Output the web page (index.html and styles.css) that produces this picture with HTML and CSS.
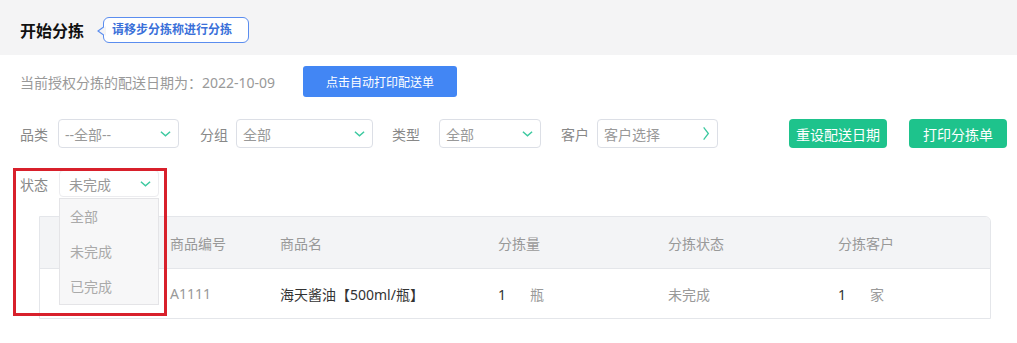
FILE: index.html
```html
<!DOCTYPE html>
<html lang="zh-CN">
<head>
    <meta charset="UTF-8">
    <meta name="viewport" content="width=device-width, initial-scale=1.0">
    <title>开始分拣</title>
    <link rel="stylesheet" href="styles.css">
</head>
<body>
    <div class="page-head">
        <h1>开始分拣</h1>
        <div class="tip">请移步分拣称进行分拣</div>
    </div>

    <div class="date-row">
        <span class="date-text">当前授权分拣的配送日期为：2022-10-09</span>
        <button class="btn-blue">点击自动打印配送单</button>
    </div>

    <div class="filter-row">
        <span class="label l-cat">品类</span>
        <div class="select w-cat"><span>--全部--</span><svg class="chev" viewBox="0 0 12 8"><polyline points="1,1.5 6,6 11,1.5"/></svg></div>
        <span class="label l-group">分组</span>
        <div class="select w-group"><span>全部</span><svg class="chev" viewBox="0 0 12 8"><polyline points="1,1.5 6,6 11,1.5"/></svg></div>
        <span class="label l-type">类型</span>
        <div class="select w-type"><span>全部</span><svg class="chev" viewBox="0 0 12 8"><polyline points="1,1.5 6,6 11,1.5"/></svg></div>
        <span class="label l-cust">客户</span>
        <div class="select w-cust"><span>客户选择</span><svg class="arrow" viewBox="0 0 8 16"><polyline points="1.5,1.5 6.5,8 1.5,14.5"/></svg></div>
        <div class="spacer"></div>
        <button class="btn-green">重设配送日期</button>
        <button class="btn-green">打印分拣单</button>
    </div>

    <div class="status-row">
        <span class="label l-status">状态</span>
        <div class="status-wrap">
            <div class="select w-status"><span>未完成</span><svg class="chev" viewBox="0 0 12 8"><polyline points="1,1.5 6,6 11,1.5"/></svg></div>
            <ul class="dropdown">
                <li>全部</li>
                <li>未完成</li>
                <li>已完成</li>
            </ul>
        </div>
        <div class="highlight"></div>
    </div>

    <div class="table">
        <div class="tr th">
            <div></div>
            <div>商品编号</div>
            <div>商品名</div>
            <div>分拣量</div>
            <div>分拣状态</div>
            <div>分拣客户</div>
        </div>
        <div class="tr td">
            <div></div>
            <div class="muted">A1111</div>
            <div>海天酱油【500ml/瓶】</div>
            <div>1<span class="unit">瓶</span></div>
            <div class="muted">未完成</div>
            <div>1<span class="unit">家</span></div>
        </div>
    </div>
</body>
</html>
```

FILE: styles.css
```css
body {
    margin: 0;
    font-family: "Noto Sans", "Noto Sans CJK SC", sans-serif;
    font-size: 14px;
    color: #333;
    background-color: #fff;
}
.page-head {
    height: 55px;
    background-color: #f4f4f5;
    display: flex;
    align-items: center;
    padding-left: 20px;
    padding-top: 4px;
    box-sizing: border-box;
}
h1 {
    margin: 0;
    font-size: 16px;
    font-weight: bold;
    color: #111;
}
.tip {
    position: relative;
    margin-left: 19px;
    height: 26px;
    line-height: 24px;
    box-sizing: border-box;
    padding: 0 16px 0 8px;
    border: 1px solid #5b8def;
    border-radius: 6px;
    background-color: #fff;
    color: #3a70d9;
    font-size: 12px;
    font-weight: bold;
}
.tip::before,
.tip::after {
    content: "";
    position: absolute;
    top: 8px;
    width: 0;
    height: 0;
    border-style: solid;
    border-width: 5px 7px 5px 0;
}
.tip::before {
    left: -7px;
    border-color: transparent #5b8def transparent transparent;
}
.tip::after {
    left: -5px;
    border-color: transparent #f4f4f5 transparent transparent;
}
.date-row {
    margin-top: 11px;
    height: 31px;
    display: flex;
    align-items: center;
    padding-left: 20px;
}
.date-text {
    color: #999;
    font-size: 14px;
}
.btn-blue {
    margin-left: 28px;
    width: 154px;
    height: 31px;
    border: none;
    border-radius: 3px;
    background-color: #4286f4;
    color: #fff;
    font-family: inherit;
    font-size: 12px;
}
.filter-row {
    margin-top: 22px;
    height: 29px;
    display: flex;
    align-items: center;
    padding: 0 10px 0 20px;
}
.label {
    color: #888;
    font-size: 14px;
}
.l-cat { margin-right: 10px; }
.l-status { margin-right: 11px; }
.l-group { margin-right: 8px; }
.l-type { margin-right: 19px; }
.l-cust { margin-right: 8px; }
.select {
    height: 29px;
    box-sizing: border-box;
    border: 1px solid #dcdfe6;
    border-radius: 4px;
    display: flex;
    align-items: center;
    justify-content: space-between;
    padding: 0 7px 0 6px;
    color: #999;
    font-size: 14px;
    background-color: #fff;
}
.w-cat { width: 121px; margin-right: 21px; }
.w-group { width: 137px; margin-right: 19px; }
.w-type { width: 102px; margin-right: 20px; }
.w-cust { width: 121px; }
.w-status { width: 100px; height: 27px; padding-left: 9px; border-color: #ececef; }
.chev {
    width: 11px;
    height: 8px;
    fill: none;
    stroke: #3cc9a0;
    stroke-width: 1.6;
}
.arrow {
    width: 8px;
    height: 15px;
    fill: none;
    stroke: #3cc9a0;
    stroke-width: 1.4;
}
.spacer {
    flex: 1;
}
.btn-green {
    width: 98px;
    height: 29px;
    margin-left: 22px;
    border: none;
    border-radius: 4px;
    background-color: #1ec38c;
    color: #fff;
    font-family: inherit;
    font-size: 14px;
}
.status-row {
    position: relative;
    margin-top: 22px;
    height: 27px;
    display: flex;
    align-items: center;
    padding-left: 20px;
    z-index: 2;
}
.status-wrap {
    position: relative;
}
.dropdown {
    position: absolute;
    top: 28px;
    left: 0;
    width: 100px;
    height: 107px;
    box-sizing: border-box;
    margin: 0;
    padding: 0 0 0 10px;
    list-style: none;
    background-color: #f7f7f8;
    border: 1px solid #e4e4e7;
    color: #aaa;
    font-size: 14px;
}
.dropdown li {
    height: 35px;
    line-height: 35px;
}
.highlight {
    position: absolute;
    left: 13px;
    top: -2px;
    width: 154px;
    height: 148px;
    box-sizing: border-box;
    border: 3px solid #d8202b;
}
.table {
    margin: 19px 0 0 39px;
    width: 950px;
    border: 1px solid #e4e6ea;
    border-radius: 0 6px 0 0;
    overflow: hidden;
}
.tr {
    display: grid;
    grid-template-columns: 130px 110px 218px 170px 170px 1fr;
    align-items: center;
}
.th {
    height: 51px;
    background-color: #f3f4f6;
    border-bottom: 1px solid #e4e6ea;
    color: #999;
}
.td {
    height: 49px;
    color: #333;
}
.muted {
    color: #999;
}
.unit {
    color: #999;
    margin-left: 24px;
}
```
